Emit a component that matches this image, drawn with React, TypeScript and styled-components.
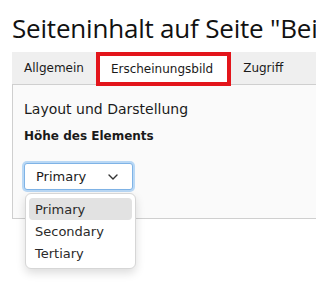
import React from "react"
import styled, { createGlobalStyle } from "styled-components"

const GlobalStyle = createGlobalStyle`
    html, body {
        margin: 0;
        padding: 0;
        background: #ffffff;
        overflow: hidden;
    }
`

const tabs = [
    { id: "general", label: "Allgemein", active: false },
    { id: "appearance", label: "Erscheinungsbild", active: true },
    { id: "access", label: "Zugriff", active: false }
]

const options = ["Primary", "Secondary", "Tertiary"]

const Page = styled.div`
    width: 316px;
    height: 303px;
    padding: 0 0 0 12px;
    box-sizing: border-box;
    overflow: hidden;
    font-family: "DejaVu Sans", Verdana, sans-serif;
    color: #1a1a1a;
`

const Title = styled.h1`
    margin: 0;
    padding-top: 13px;
    height: 52px;
    box-sizing: border-box;
    font-family: "Open Sans", "Liberation Sans", sans-serif;
    font-weight: 400;
    font-size: 26px;
    line-height: 31px;
    letter-spacing: -0.2px;
    white-space: nowrap;
    color: #111;
`

const TabBar = styled.div`
    display: flex;
    width: 400px;
    height: 32px;
    background: #efefef;
    border-bottom: 1px solid #cfcfcf;
`

const Tab = styled.div<{ $active: boolean }>`
    display: flex;
    align-items: center;
    height: ${p => (p.$active ? "34px" : "32px")};
    padding: ${p => (p.$active ? "0 14px 0 11px" : "0 12px")};
    box-sizing: border-box;
    font-size: 12px;
    white-space: nowrap;
    color: #1a1a1a;
    background: ${p => (p.$active ? "#ffffff" : "transparent")};
    border: ${p => (p.$active ? "4px solid #e3151b" : "none")};
    position: relative;
    z-index: 1;
`

const Panel = styled.div`
    position: relative;
    width: 400px;
    height: 134px;
    box-sizing: border-box;
    background: #fafafa;
    border: 1px solid #cfcfcf;
    border-top: none;
    padding: 14px 11px;
`

const Heading = styled.div`
    font-size: 14px;
    line-height: 20px;
    color: #1a1a1a;
`

const FieldLabel = styled.div`
    margin-top: 9px;
    font-size: 12px;
    font-weight: 700;
    line-height: 16px;
`

const SelectBox = styled.div`
    margin-top: 19px;
    width: 109px;
    height: 27px;
    box-sizing: border-box;
    display: flex;
    align-items: center;
    justify-content: space-between;
    padding: 0 14px 0 11px;
    background: #ffffff;
    border: 1px solid #7fb3e6;
    border-radius: 3px;
    box-shadow: 0 0 0 2px #b9d8f5;
    font-size: 13px;
    color: #1a1a1a;
`

const Menu = styled.div`
    position: absolute;
    left: 12px;
    top: 108px;
    width: 111px;
    box-sizing: border-box;
    padding: 4px 3px;
    background: #ffffff;
    border: 1px solid #d6d6d6;
    border-radius: 6px;
    box-shadow: 0 4px 10px rgba(0, 0, 0, 0.14);
    z-index: 2;
`

const MenuItem = styled.div<{ $selected: boolean }>`
    height: 22px;
    display: flex;
    align-items: center;
    padding: 0 6px;
    border-radius: 4px;
    font-size: 13px;
    color: #2a2a2a;
    background: ${p => (p.$selected ? "#e2e2e2" : "transparent")};
`

function Chevron() {
    return (
        <svg width="10" height="6" viewBox="0 0 10 6" fill="none">
            <path d="M1 1l4 4 4-4" stroke="#333" strokeWidth="1.4" strokeLinecap="round" strokeLinejoin="round" />
        </svg>
    )
}

export default function App() {
    return (
        <Page>
            <GlobalStyle />
            <Title>Seiteninhalt auf Seite "Beispiel"</Title>
            <TabBar>
                {tabs.map(tab => (
                    <Tab key={tab.id} $active={tab.active}>
                        {tab.label}
                    </Tab>
                ))}
            </TabBar>
            <Panel>
                <Heading>Layout und Darstellung</Heading>
                <FieldLabel>Höhe des Elements</FieldLabel>
                <SelectBox>
                    <span>Primary</span>
                    <Chevron />
                </SelectBox>
                <Menu>
                    {options.map((opt, i) => (
                        <MenuItem key={opt} $selected={i === 0}>
                            {opt}
                        </MenuItem>
                    ))}
                </Menu>
            </Panel>
        </Page>
    )
}
